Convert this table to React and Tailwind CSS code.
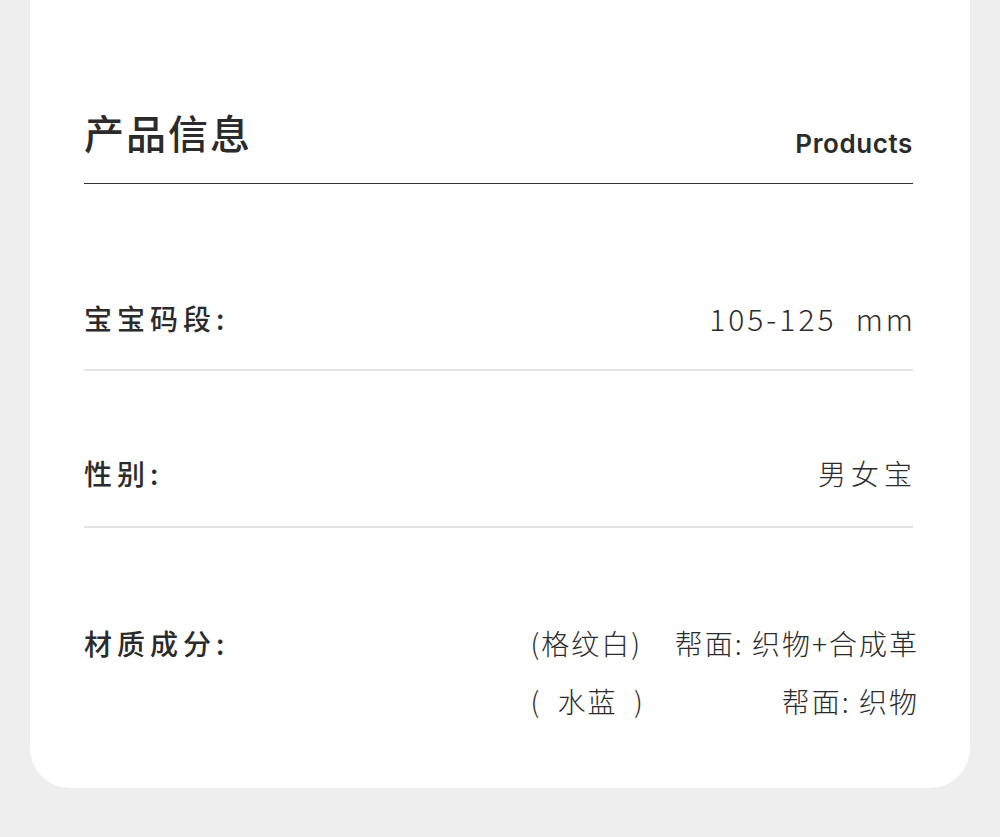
export default function App() {
  const cjk = { fontFamily: '"Noto Sans CJK SC", "Noto Sans", sans-serif' };
  return (
    <div className="min-h-[837px] w-full bg-[#eeeeee] px-[30px]" style={cjk}>
      <div className="rounded-b-[40px] bg-white pl-[54px] pr-[57px] pb-[72px]">
        {/* header */}
        <div className="flex h-[184px] items-end justify-between border-b border-[#333333] pb-[26px]">
          <h1 className="mb-[5px] text-[40px] font-medium leading-none tracking-[2px] text-[#2b2b2b]">产品信息</h1>
          <span
            className="text-[26px] font-semibold leading-none tracking-[0.6px] text-[#2b2b2b]"
            style={{ fontFamily: 'Inter, "Noto Sans", sans-serif' }}
          >
            Products
          </span>
        </div>

        {/* row 1 */}
        <div className="flex h-[187px] items-end justify-between border-b-2 border-[#e3e3e3] pb-[36px]">
          <span className="text-[28px] font-medium leading-[30px] tracking-[5px] text-[#2b2b2b]">宝宝码段:</span>
          <span className="mr-[-3px] whitespace-pre text-[30px] font-light leading-[30px] tracking-[3px] text-[#2b2b2b]">105-125  mm</span>
        </div>

        {/* row 2 */}
        <div className="flex h-[157px] items-end justify-between border-b-2 border-[#e3e3e3] pb-[38px]">
          <span className="text-[28px] font-medium leading-[30px] tracking-[5px] text-[#2b2b2b]">性别:</span>
          <span className="mr-[-4px] text-[28px] font-light leading-[30px] tracking-[5px] text-[#2b2b2b]">男女宝</span>
        </div>

        {/* row 3 */}
        <div className="flex items-start justify-between pt-[100px]">
          <span className="text-[28px] font-medium leading-[30px] tracking-[5px] text-[#2b2b2b]">材质成分:</span>
          <div className="mr-[-6px] grid grid-cols-[auto_auto] gap-x-[30px] gap-y-[28px] text-[28px] font-light leading-[30px] tracking-[2px] text-[#2b2b2b]">
            <span className="whitespace-pre">(格纹白)</span>
            <span className="text-right">帮面: 织物+合成革</span>
            <span className="whitespace-pre">(  水蓝  )</span>
            <span className="text-right">帮面: 织物</span>
          </div>
        </div>
      </div>
    </div>
  );
}
